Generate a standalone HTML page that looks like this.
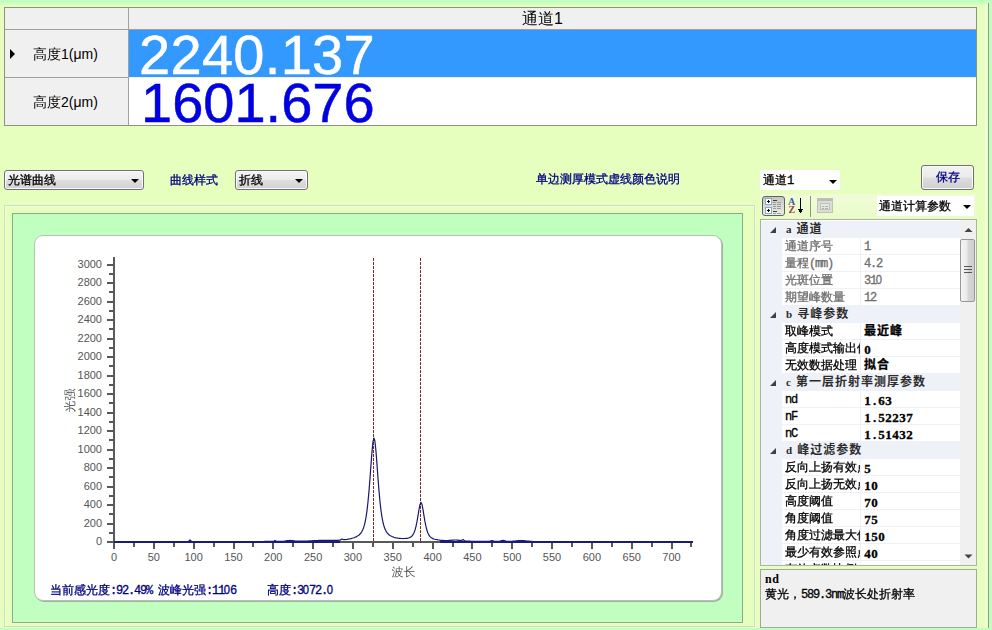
<!DOCTYPE html>
<html lang="zh-CN">
<head>
<meta charset="utf-8">
<title>光谱曲线</title>
<style>
html,body{margin:0;padding:0;}
body{width:992px;height:630px;position:relative;overflow:hidden;background:#E6FFBF;
  font-family:"Liberation Sans","Noto Sans CJK SC",sans-serif;font-size:12px;color:#000;}
.abs{position:absolute;}
.t{position:absolute;white-space:nowrap;line-height:1;}
#gtop{left:0;top:0;width:992px;height:6px;background:linear-gradient(#C0FFC0 0,#C0FFC0 35%,#E6FFBF 100%);}
#gbot{left:0;top:628px;width:992px;height:2px;background:#C0FFC0;}
#gright{left:989px;top:0;width:3px;height:630px;background:#C0FFC0;}
#rl1{left:985px;top:4px;width:2px;height:623px;background:#F4FDE0;}
#rl2{left:988px;top:3px;width:1px;height:625px;background:#8E9E7E;}
#tbl{left:4px;top:7px;width:971px;height:117px;border:1px solid #8E937F;background:#F0F0F0;}
#tbl .hsep{left:0;width:971px;height:1px;background:#A0A0A0;}
#tbl .vsep{left:123px;top:0;width:1px;height:117px;background:#A0A0A0;}
#r1{left:124px;top:22px;width:847px;height:47px;background:#3399FF;}
#r2{left:124px;top:70px;width:847px;height:47px;background:#FFFFFF;}
.big{font-size:56px;letter-spacing:0.3px;-webkit-text-stroke:0.5px currentColor;}
.rowlbl{font-size:14px;font-family:"Liberation Sans","WenQuanYi Zen Hei",sans-serif;}
.combo{height:18px;border:1px solid #707070;border-radius:3px;background:linear-gradient(#F4F4F4 0,#ECECEC 48%,#DEDEDE 52%,#D0D0D0 100%);box-shadow:inset 0 0 0 1px #FAFAFA;}
.arr{position:absolute;width:0;height:0;border-left:4px solid transparent;border-right:4px solid transparent;border-top:4px solid #000;}
.s12{font-family:"WenQuanYi Zen Hei","Noto Sans CJK SC",sans-serif;font-size:12px;-webkit-text-stroke:0.3px currentColor;}
.s12 i,.m{font-style:normal;font-family:"Liberation Mono",monospace;letter-spacing:-1.2px;}
.s12 u{text-decoration:none;font-family:"Liberation Sans",sans-serif;display:inline-block;width:6px;letter-spacing:0;text-indent:-0.6px;font-size:12.5px;transform:scaleX(0.9);}
.navy{color:#000080;}
#bev{left:4px;top:205px;width:751px;height:422px;border:1px solid #CFE0B4;box-shadow:inset 1px 1px 0 #F6FDE6, 1px 1px 0 #F6FDE6;box-sizing:border-box;}
#gp{left:12px;top:213px;width:731px;height:410px;background:#C0FFC0;border:1px solid #8CAA8C;box-sizing:border-box;}
#wb{left:34px;top:235px;width:688px;height:366px;background:#fff;border-radius:9px;border:1px solid #B4C4B4;box-shadow:1px 1px 0 #A4B0A4;box-sizing:border-box;}
svg text{font-family:"Liberation Sans","Noto Sans CJK SC",sans-serif;}
/* property grid */
#pg{left:760px;top:219px;width:215px;height:345px;border:1px solid #A9B4A4;background:#fff;overflow:hidden;}
.row{position:absolute;left:0;width:199px;height:17px;}
.cat{background:#EEF1F7;}
.cat .ct{position:absolute;left:26px;top:2px;letter-spacing:1px;font-weight:bold;color:#2C2C2C;white-space:nowrap;line-height:13px;font-family:"Liberation Serif","Noto Sans CJK SC",sans-serif;font-size:12px;}
.cat .ct b{font-family:"Liberation Serif",serif;font-size:11px;margin-right:5px;letter-spacing:0;margin-left:-1px;}
.tri{position:absolute;left:9px;top:6px;width:0;height:0;border-left:6px solid transparent;border-bottom:6px solid #404040;}
.ind{position:absolute;left:0;top:0;width:21px;height:17px;background:#EEF1F7;}
.lab{position:absolute;left:21px;top:0;width:78px;height:16px;background:#fff;border-bottom:1px solid #EEF1F7;border-right:1px solid #EEF1F7;overflow:hidden;white-space:nowrap;}
.lab span{position:absolute;left:3px;top:2px;line-height:13px;}
.val{position:absolute;left:100px;top:0;width:99px;height:16px;background:#fff;border-bottom:1px solid #EEF1F7;overflow:hidden;white-space:nowrap;}
.val span{position:absolute;left:3px;top:2px;line-height:13px;}
.val.bd span{top:3px;}
.ro{color:#6D6D6D;}
.bd{font-weight:bold;letter-spacing:1px;font-family:"Liberation Mono","Noto Sans CJK SC",sans-serif;}
.bd i{font-style:normal;letter-spacing:0;font-family:"Liberation Serif",serif;font-weight:bold;font-size:13px;display:inline-block;width:7px;text-align:center;}
#sb{left:199px;top:0;width:16px;height:345px;background:#F0F0F0;}
#thumb{left:0px;top:19px;width:13px;height:61px;border:1px solid #979797;border-radius:2px;background:linear-gradient(90deg,#F4F4F4 0,#EAEAEA 45%,#D6D6D6 55%,#CFCFCF 100%);}
#desc{left:760px;top:569px;width:215px;height:57px;border:1px solid #A0A8A0;background:#F0F0F0;}
</style>
</head>
<body>
<div id="gtop" class="abs"></div><div id="gbot" class="abs"></div><div id="gright" class="abs"></div><div id="rl1" class="abs"></div><div id="rl2" class="abs"></div>
<div id="tbl" class="abs">
  <div class="abs hsep" style="top:21px"></div>
  <div class="abs hsep" style="top:69px;width:124px"></div>
  <div class="abs vsep"></div>
  <div id="r1" class="abs"></div>
  <div id="r2" class="abs"></div>
  <div class="t" style="left:517px;top:3px;font-size:16px;font-family:'Liberation Sans','WenQuanYi Zen Hei',sans-serif;">通道1</div>
  <div class="abs" style="left:5px;top:41px;width:0;height:0;border-top:5px solid transparent;border-bottom:5px solid transparent;border-left:5px solid #000;"></div>
  <div class="t rowlbl" style="left:28px;top:39px;">高度1(μm)</div>
  <div class="t rowlbl" style="left:28px;top:87px;">高度2(μm)</div>
  <div class="t big" style="left:134px;top:18.5px;color:#fff;">2240.137</div>
  <div class="t big" style="left:136px;top:66.5px;color:#0000E0;letter-spacing:0">1601.676</div>
</div>
<div class="abs combo" style="left:4px;top:170px;width:138px;"><span class="t s12" style="left:3px;top:3px;">光谱曲线</span><span class="arr" style="right:4px;top:8px"></span></div>
<div class="t s12 navy" style="left:170px;top:174px;">曲线样式</div>
<div class="abs combo" style="left:235px;top:170px;width:71px;"><span class="t s12" style="left:3px;top:3px;">折线</span><span class="arr" style="right:4px;top:8px"></span></div>
<div class="t s12 navy" style="left:536px;top:173px;">单边测厚模式虚线颜色说明</div>
<div class="abs" style="left:760px;top:170px;width:80px;height:20px;background:#fff;"><span class="t s12" style="left:3px;top:4px;">通道<i>1</i></span><span class="arr" style="left:69px;top:10px"></span></div>
<div class="abs" style="left:921px;top:165px;width:51px;height:23px;border:1px solid #707070;border-radius:3px;background:linear-gradient(#F2F2F2 0,#EBEBEB 48%,#DDDDDD 52%,#CFCFCF 100%);box-shadow:inset 0 0 0 1px #FAFAFA;"><span class="t s12 navy" style="left:14px;top:5px;">保存</span></div>
<div id="bev" class="abs"></div><div id="gp" class="abs"></div><div id="wb" class="abs"></div>
<svg class="abs" style="left:0;top:0" width="992" height="630" viewBox="0 0 992 630">
<g fill="#595959" shape-rendering="crispEdges">
<rect x="113" y="257" width="2" height="292"/>
<rect x="113" y="541" width="580" height="2"/>
<rect x="107" y="541" width="6" height="2"/>
<rect x="109" y="532" width="4" height="2"/>
<rect x="107" y="523" width="6" height="2"/>
<rect x="109" y="513" width="4" height="2"/>
<rect x="107" y="504" width="6" height="2"/>
<rect x="109" y="495" width="4" height="2"/>
<rect x="107" y="486" width="6" height="2"/>
<rect x="109" y="476" width="4" height="2"/>
<rect x="107" y="467" width="6" height="2"/>
<rect x="109" y="458" width="4" height="2"/>
<rect x="107" y="449" width="6" height="2"/>
<rect x="109" y="439" width="4" height="2"/>
<rect x="107" y="430" width="6" height="2"/>
<rect x="109" y="421" width="4" height="2"/>
<rect x="107" y="412" width="6" height="2"/>
<rect x="109" y="402" width="4" height="2"/>
<rect x="107" y="393" width="6" height="2"/>
<rect x="109" y="384" width="4" height="2"/>
<rect x="107" y="375" width="6" height="2"/>
<rect x="109" y="365" width="4" height="2"/>
<rect x="107" y="356" width="6" height="2"/>
<rect x="109" y="347" width="4" height="2"/>
<rect x="107" y="338" width="6" height="2"/>
<rect x="109" y="328" width="4" height="2"/>
<rect x="107" y="319" width="6" height="2"/>
<rect x="109" y="310" width="4" height="2"/>
<rect x="107" y="301" width="6" height="2"/>
<rect x="109" y="291" width="4" height="2"/>
<rect x="107" y="282" width="6" height="2"/>
<rect x="109" y="273" width="4" height="2"/>
<rect x="107" y="264" width="6" height="2"/>
<rect x="113.0" y="543" width="2" height="6"/>
<rect x="132.9" y="543" width="2" height="4"/>
<rect x="152.8" y="543" width="2" height="6"/>
<rect x="172.7" y="543" width="2" height="4"/>
<rect x="192.6" y="543" width="2" height="6"/>
<rect x="212.6" y="543" width="2" height="4"/>
<rect x="232.5" y="543" width="2" height="6"/>
<rect x="252.4" y="543" width="2" height="4"/>
<rect x="272.3" y="543" width="2" height="6"/>
<rect x="292.2" y="543" width="2" height="4"/>
<rect x="312.1" y="543" width="2" height="6"/>
<rect x="332.0" y="543" width="2" height="4"/>
<rect x="351.9" y="543" width="2" height="6"/>
<rect x="371.8" y="543" width="2" height="4"/>
<rect x="391.8" y="543" width="2" height="6"/>
<rect x="411.7" y="543" width="2" height="4"/>
<rect x="431.6" y="543" width="2" height="6"/>
<rect x="451.5" y="543" width="2" height="4"/>
<rect x="471.4" y="543" width="2" height="6"/>
<rect x="491.3" y="543" width="2" height="4"/>
<rect x="511.2" y="543" width="2" height="6"/>
<rect x="531.1" y="543" width="2" height="4"/>
<rect x="551.0" y="543" width="2" height="6"/>
<rect x="570.9" y="543" width="2" height="4"/>
<rect x="590.9" y="543" width="2" height="6"/>
<rect x="610.8" y="543" width="2" height="4"/>
<rect x="630.7" y="543" width="2" height="6"/>
<rect x="650.6" y="543" width="2" height="4"/>
<rect x="670.5" y="543" width="2" height="6"/>
<rect x="690.4" y="543" width="2" height="4"/>
</g>
<g fill="#555" font-size="11">
<text x="102" y="545.2" text-anchor="end">0</text>
<text x="102" y="526.7" text-anchor="end">200</text>
<text x="102" y="508.2" text-anchor="end">400</text>
<text x="102" y="489.7" text-anchor="end">600</text>
<text x="102" y="471.2" text-anchor="end">800</text>
<text x="102" y="452.7" text-anchor="end">1000</text>
<text x="102" y="434.2" text-anchor="end">1200</text>
<text x="102" y="415.7" text-anchor="end">1400</text>
<text x="102" y="397.2" text-anchor="end">1600</text>
<text x="102" y="378.7" text-anchor="end">1800</text>
<text x="102" y="360.2" text-anchor="end">2000</text>
<text x="102" y="341.7" text-anchor="end">2200</text>
<text x="102" y="323.2" text-anchor="end">2400</text>
<text x="102" y="304.7" text-anchor="end">2600</text>
<text x="102" y="286.2" text-anchor="end">2800</text>
<text x="102" y="267.7" text-anchor="end">3000</text>
<text x="114.0" y="561" text-anchor="middle">0</text>
<text x="153.8" y="561" text-anchor="middle">50</text>
<text x="193.6" y="561" text-anchor="middle">100</text>
<text x="233.5" y="561" text-anchor="middle">150</text>
<text x="273.3" y="561" text-anchor="middle">200</text>
<text x="313.1" y="561" text-anchor="middle">250</text>
<text x="352.9" y="561" text-anchor="middle">300</text>
<text x="392.8" y="561" text-anchor="middle">350</text>
<text x="432.6" y="561" text-anchor="middle">400</text>
<text x="472.4" y="561" text-anchor="middle">450</text>
<text x="512.2" y="561" text-anchor="middle">500</text>
<text x="552.0" y="561" text-anchor="middle">550</text>
<text x="591.9" y="561" text-anchor="middle">600</text>
<text x="631.7" y="561" text-anchor="middle">650</text>
<text x="671.5" y="561" text-anchor="middle">700</text>
</g>
<text x="403.500" y="576" text-anchor="middle" font-size="12" fill="#555" style="font-family:'WenQuanYi Zen Hei','Noto Sans CJK SC',sans-serif">波长</text>
<text transform="translate(73.5,400.5) rotate(-90)" text-anchor="middle" font-size="12" fill="#555" style="font-family:'WenQuanYi Zen Hei','Noto Sans CJK SC',sans-serif">光强</text>
<line x1="373.5" y1="258" x2="373.5" y2="543" stroke="#6E2A2A" stroke-width="1" stroke-dasharray="3,1" shape-rendering="crispEdges"/>
<line x1="420.5" y1="258" x2="420.5" y2="543" stroke="#6E2A2A" stroke-width="1" stroke-dasharray="3,1" shape-rendering="crispEdges"/>
<polyline fill="none" stroke="#18186E" stroke-width="1.2" stroke-linejoin="round" points="114.0,541.6 115.0,541.6 116.0,541.6 117.0,541.6 118.0,541.6 119.0,541.6 120.0,541.6 121.0,541.6 122.0,541.6 123.0,541.6 124.0,541.6 125.0,541.6 126.0,541.6 127.0,541.6 128.0,541.6 129.0,541.6 130.0,541.6 131.0,541.6 132.0,541.6 133.0,541.6 134.0,541.6 135.0,541.6 136.0,541.6 137.0,541.6 138.0,541.6 139.0,541.6 140.0,541.6 141.0,541.6 142.0,541.6 143.0,541.6 144.0,541.6 145.0,541.6 146.0,541.6 147.0,541.6 148.0,541.6 149.0,541.6 150.0,541.6 151.0,541.6 152.0,541.6 153.0,541.6 154.0,541.6 155.0,541.6 156.0,541.6 157.0,541.6 158.0,541.6 159.0,541.6 160.0,541.6 161.0,541.6 162.0,541.6 163.0,541.6 164.0,541.6 165.0,541.6 166.0,541.6 167.0,541.6 168.0,541.6 169.0,541.6 170.0,541.6 171.0,541.6 172.0,541.6 173.0,541.6 174.0,541.6 175.0,541.6 176.0,541.6 177.0,541.6 178.0,541.6 179.0,541.6 180.0,541.6 181.0,541.5 182.0,541.5 183.0,541.5 184.0,541.5 185.0,541.5 186.0,541.5 187.0,541.5 188.0,541.5 189.0,541.0 190.0,539.9 191.0,541.0 192.0,541.5 193.0,541.5 194.0,541.5 195.0,541.5 196.0,541.5 197.0,541.5 198.0,541.5 199.0,541.5 200.0,541.5 201.0,541.5 202.0,541.5 203.0,541.5 204.0,541.5 205.0,541.5 206.0,541.5 207.0,541.5 208.0,541.5 209.0,541.5 210.0,541.5 211.0,541.5 212.0,541.5 213.0,541.5 214.0,541.5 215.0,541.5 216.0,541.5 217.0,541.5 218.0,541.5 219.0,541.5 220.0,541.5 221.0,541.5 222.0,541.5 223.0,541.5 224.0,541.5 225.0,541.5 226.0,541.5 227.0,541.5 228.0,541.5 229.0,541.5 230.0,541.5 231.0,541.5 232.0,541.5 233.0,541.5 234.0,541.5 235.0,541.5 236.0,541.5 237.0,541.5 238.0,541.5 239.0,541.5 240.0,541.5 241.0,541.5 242.0,541.5 243.0,541.5 244.0,541.5 245.0,541.5 246.0,541.5 247.0,541.5 248.0,541.5 249.0,541.5 250.0,541.5 251.0,541.5 252.0,541.5 253.0,541.5 254.0,541.5 255.0,541.5 256.0,541.5 257.0,541.5 258.0,541.5 259.0,541.5 260.0,541.5 261.0,541.5 262.0,541.5 263.0,541.5 264.0,541.5 265.0,541.4 266.0,541.4 267.0,541.4 268.0,541.4 269.0,541.4 270.0,541.4 271.0,541.4 272.0,541.4 273.0,541.4 274.0,541.1 275.0,540.4 276.0,541.0 277.0,541.4 278.0,541.4 279.0,541.4 280.0,541.4 281.0,541.4 282.0,541.3 283.0,541.3 284.0,541.2 285.0,541.0 286.0,540.9 287.0,540.7 288.0,540.6 289.0,540.5 290.0,540.4 291.0,540.5 292.0,540.6 293.0,540.7 294.0,540.8 295.0,541.0 296.0,541.1 297.0,541.2 298.0,541.2 299.0,541.2 300.0,541.2 301.0,541.2 302.0,541.2 303.0,541.2 304.0,541.1 305.0,541.1 306.0,541.1 307.0,541.0 308.0,541.0 309.0,540.9 310.0,540.9 311.0,540.8 312.0,540.8 313.0,540.7 314.0,540.7 315.0,540.6 316.0,540.6 317.0,540.5 318.0,540.5 319.0,540.4 320.0,540.4 321.0,540.4 322.0,540.4 323.0,540.4 324.0,540.4 325.0,540.4 326.0,540.4 327.0,540.4 328.0,540.4 329.0,540.4 330.0,540.4 331.0,540.4 332.0,540.4 333.0,540.4 334.0,540.4 335.0,540.4 336.0,540.3 337.0,540.3 338.0,540.3 339.0,540.2 340.0,540.1 341.0,539.6 342.0,539.0 343.0,539.4 344.0,539.7 345.0,539.7 346.0,539.5 347.0,539.4 348.0,539.2 349.0,539.0 350.0,538.8 351.0,538.6 352.0,538.3 353.0,538.0 354.0,537.7 355.0,537.3 356.0,536.9 357.0,536.3 358.0,535.7 359.0,535.0 360.0,534.0 361.0,532.9 362.0,531.3 363.0,529.3 364.0,526.4 365.0,522.6 366.0,517.4 367.0,510.6 368.0,501.8 369.0,490.9 370.0,478.3 371.0,464.6 372.0,451.6 373.0,441.7 374.0,438.0 375.0,441.7 376.0,451.5 377.0,464.6 378.0,478.2 379.0,490.9 380.0,501.7 381.0,510.5 382.0,517.3 383.0,522.5 384.0,526.3 385.0,529.1 386.0,531.1 387.0,532.6 388.0,533.8 389.0,534.7 390.0,535.4 391.0,536.0 392.0,536.5 393.0,536.9 394.0,537.3 395.0,537.6 396.0,537.8 397.0,538.0 398.0,538.2 399.0,538.3 400.0,538.4 401.0,538.5 402.0,538.5 403.0,538.6 404.0,538.5 405.0,538.5 406.0,538.4 407.0,538.3 408.0,538.1 409.0,537.8 410.0,537.4 411.0,536.8 412.0,536.0 413.0,534.7 414.0,532.8 415.0,530.1 416.0,526.4 417.0,521.5 418.0,515.6 419.0,509.5 420.0,504.4 421.0,502.4 422.0,504.5 423.0,509.6 424.0,515.8 425.0,521.7 426.0,526.7 427.0,530.5 428.0,533.3 429.0,535.2 430.0,536.6 431.0,537.5 432.0,538.1 433.0,538.6 434.0,539.0 435.0,539.3 436.0,539.5 437.0,539.7 438.0,539.9 439.0,540.0 440.0,540.2 441.0,540.3 442.0,540.4 443.0,540.4 444.0,540.5 445.0,540.5 446.0,540.5 447.0,540.5 448.0,540.5 449.0,540.4 450.0,540.4 451.0,540.3 452.0,540.2 453.0,540.1 454.0,540.1 455.0,540.0 456.0,540.0 457.0,540.1 458.0,540.2 459.0,540.3 460.0,540.4 461.0,540.5 462.0,540.1 463.0,539.6 464.0,540.3 465.0,540.9 466.0,541.1 467.0,541.1 468.0,541.2 469.0,541.2 470.0,541.2 471.0,541.3 472.0,541.3 473.0,541.3 474.0,541.3 475.0,541.3 476.0,541.3 477.0,541.3 478.0,541.3 479.0,541.3 480.0,541.3 481.0,541.3 482.0,541.4 483.0,541.4 484.0,541.4 485.0,541.4 486.0,541.4 487.0,541.4 488.0,541.4 489.0,541.4 490.0,541.2 491.0,540.8 492.0,540.5 493.0,540.8 494.0,541.3 495.0,541.4 496.0,541.4 497.0,541.4 498.0,541.4 499.0,541.3 500.0,541.1 501.0,540.8 502.0,540.5 503.0,540.4 504.0,540.5 505.0,540.8 506.0,541.1 507.0,541.3 508.0,541.4 509.0,541.4 510.0,541.4 511.0,541.3 512.0,541.3 513.0,541.2 514.0,541.1 515.0,541.0 516.0,540.9 517.0,540.8 518.0,540.6 519.0,540.6 520.0,540.5 521.0,540.5 522.0,540.5 523.0,540.6 524.0,540.7 525.0,540.8 526.0,540.9 527.0,541.0 528.0,541.1 529.0,541.2 530.0,541.3 531.0,541.4 532.0,541.4 533.0,541.5 534.0,541.5 535.0,541.5 536.0,541.5 537.0,541.5 538.0,541.5 539.0,541.5 540.0,541.5 541.0,541.5 542.0,541.5 543.0,541.5 544.0,541.5 545.0,541.5 546.0,541.5 547.0,541.5 548.0,541.5 549.0,541.5 550.0,541.5 551.0,541.5 552.0,541.5 553.0,541.5 554.0,541.5 555.0,541.5 556.0,541.5 557.0,541.5 558.0,541.5 559.0,541.5 560.0,541.5 561.0,541.5 562.0,541.5 563.0,541.5 564.0,541.5 565.0,541.5 566.0,541.5 567.0,541.5 568.0,541.5 569.0,541.5 570.0,541.5 571.0,541.5 572.0,541.5 573.0,541.5 574.0,541.5 575.0,541.5 576.0,541.5 577.0,541.5 578.0,541.5 579.0,541.5 580.0,541.5 581.0,541.5 582.0,541.5 583.0,541.5 584.0,541.5 585.0,541.5 586.0,541.5 587.0,541.5 588.0,541.6 589.0,541.6 590.0,541.6 591.0,541.6 592.0,541.6 593.0,541.6 594.0,541.6 595.0,541.6 596.0,541.6 597.0,541.6 598.0,541.6 599.0,541.6 600.0,541.6 601.0,541.6 602.0,541.6 603.0,541.6 604.0,541.6 605.0,541.6 606.0,541.6 607.0,541.6 608.0,541.6 609.0,541.6 610.0,541.6 611.0,541.6 612.0,541.6 613.0,541.6 614.0,541.6 615.0,541.6 616.0,541.6 617.0,541.6 618.0,541.6 619.0,541.6 620.0,541.6 621.0,541.6 622.0,541.6 623.0,541.6 624.0,541.6 625.0,541.6 626.0,541.6 627.0,541.6 628.0,541.6 629.0,541.6 630.0,541.6 631.0,541.6 632.0,541.6 633.0,541.6 634.0,541.6 635.0,541.6 636.0,541.6 637.0,541.6 638.0,541.6 639.0,541.6 640.0,541.6 641.0,541.6 642.0,541.6 643.0,541.6 644.0,541.6 645.0,541.6 646.0,541.6 647.0,541.6 648.0,541.6 649.0,541.6 650.0,541.6 651.0,541.6 652.0,541.6 653.0,541.6 654.0,541.6 655.0,541.6 656.0,541.6 657.0,541.6 658.0,541.6 659.0,541.6 660.0,541.6 661.0,541.6 662.0,541.6 663.0,541.6 664.0,541.6 665.0,541.6 666.0,541.6 667.0,541.6 668.0,541.6 669.0,541.6 670.0,541.6 671.0,541.6 672.0,541.6 673.0,541.6 674.0,541.6 675.0,541.6 676.0,541.6 677.0,541.6 678.0,541.6 679.0,541.6 680.0,541.6 681.0,541.6 682.0,541.6 683.0,541.6 684.0,541.6 685.0,541.6 686.0,541.6 687.0,541.6 688.0,541.6 689.0,541.6 690.0,541.6 691.0,541.6 692.0,541.6 693.0,541.6"/>
<rect x="114" y="541" width="226" height="2" fill="#1B1B78"/><rect x="440" y="541" width="253" height="2" fill="#1B1B78"/>
</svg>
<div class="t s12 navy" style="left:50px;top:584px;">当前感光度<i>:92.49% </i>波峰光强<i>:11<u>0</u>6</i></div>
<div class="t s12 navy" style="left:267px;top:584px;">高度<i>:3<u>0</u>72.<u>0</u></i></div>
<div class="abs" style="left:760px;top:194px;width:216px;height:25px;background:linear-gradient(#F0FCD8,#E9FBC6);"></div>
<div class="abs" style="left:762px;top:196px;width:21px;height:18px;border:1px solid #5E625A;border-radius:3px;background:linear-gradient(#C4C6C0,#ECEEE6);"></div>
<svg class="abs" style="left:760px;top:194px" width="80" height="25" viewBox="0 0 80 25">
 <g shape-rendering="crispEdges">
  <rect x="5.500" y="4.500" width="6" height="6" fill="#fff" stroke="#8FAACB"/><rect x="7" y="7" width="3" height="1" fill="#000"/><rect x="8" y="6" width="1" height="3" fill="#000"/>
  <rect x="5.500" y="13.500" width="6" height="6" fill="#fff" stroke="#8FAACB"/><rect x="7" y="16" width="3" height="1" fill="#000"/><rect x="8" y="15" width="1" height="3" fill="#000"/>
  <g fill="#3C3C3C"><rect x="13" y="6" width="4" height="1"/><rect x="13" y="17" width="4" height="1"/></g>
  <g fill="#9C9C9C"><rect x="13" y="8" width="3" height="1"/><rect x="17" y="8" width="4" height="1"/><rect x="13" y="10" width="3" height="1"/><rect x="17" y="10" width="4" height="1"/><rect x="13" y="12" width="3" height="1"/><rect x="17" y="12" width="4" height="1"/><rect x="13" y="14" width="3" height="1"/><rect x="17" y="14" width="4" height="1"/>
  <rect x="13" y="19" width="3" height="1"/><rect x="17" y="19" width="4" height="1"/></g>
  <rect x="40" y="4" width="1" height="15" fill="#000"/><rect x="38" y="15" width="5" height="1" fill="#000"/><rect x="39" y="16" width="3" height="2" fill="#000"/>
  <rect x="50" y="2" width="1" height="21" fill="#8C9486"/>
  <rect x="57.500" y="4.500" width="15" height="14" fill="#DADCD6" stroke="#BEC2B8"/><rect x="58" y="5" width="14" height="2" fill="#B8BCB2"/><rect x="60.500" y="9.500" width="9" height="6" fill="#E6E8E2" stroke="#BEC2B8"/><rect x="62" y="12" width="2" height="1" fill="#AEB2A8"/><rect x="65" y="12" width="3" height="1" fill="#AEB2A8"/><rect x="62" y="14" width="2" height="1" fill="#AEB2A8"/><rect x="65" y="14" width="3" height="1" fill="#AEB2A8"/>
 </g>
 <text x="28" y="10.5" font-size="10" font-weight="bold" fill="#3A5CA6" style="font-family:'Liberation Serif',serif">A</text>
 <text x="28.500" y="19" font-size="10" font-weight="bold" fill="#A83A48" style="font-family:'Liberation Serif',serif">Z</text>
</svg>
<div class="abs" style="left:877px;top:196px;width:97px;height:20px;background:#fff;"><span class="t s12" style="left:2px;top:4px;">通道计算参数</span><span class="arr" style="left:86px;top:9px"></span></div>
<div id="pg" class="abs">
<div class="row cat" style="top:1px"><span class="tri"></span><span class="ct"><b>a</b>通道</span></div>
<div class="row" style="top:18px"><span class="ind"></span><span class="lab s12 ro"><span>通道序号</span></span><span class="val s12 ro"><span><i>1</i></span></span></div>
<div class="row" style="top:35px"><span class="ind"></span><span class="lab s12 ro"><span>量程<i>(mm)</i></span></span><span class="val s12 ro"><span><i>4.2</i></span></span></div>
<div class="row" style="top:52px"><span class="ind"></span><span class="lab s12 ro"><span>光斑位置</span></span><span class="val s12 ro"><span><i>31<u>0</u></i></span></span></div>
<div class="row" style="top:69px"><span class="ind"></span><span class="lab s12 ro"><span>期望峰数量</span></span><span class="val s12 ro"><span><i>12</i></span></span></div>
<div class="row cat" style="top:86px"><span class="tri"></span><span class="ct"><b>b</b>寻峰参数</span></div>
<div class="row" style="top:103px"><span class="ind"></span><span class="lab s12 "><span>取峰模式</span></span><span class="val s12 bd"><span>最近峰</span></span></div>
<div class="row" style="top:120px"><span class="ind"></span><span class="lab s12 "><span>高度模式输出值</span></span><span class="val s12 bd"><span><i>0</i></span></span></div>
<div class="row" style="top:137px"><span class="ind"></span><span class="lab s12 "><span>无效数据处理</span></span><span class="val s12 bd"><span>拟合</span></span></div>
<div class="row cat" style="top:154px"><span class="tri"></span><span class="ct"><b>c</b>第一层折射率测厚参数</span></div>
<div class="row" style="top:171px"><span class="ind"></span><span class="lab s12 "><span><i>nd</i></span></span><span class="val s12 bd"><span><i>1</i><i>.</i><i>6</i><i>3</i></span></span></div>
<div class="row" style="top:188px"><span class="ind"></span><span class="lab s12 "><span><i>nF</i></span></span><span class="val s12 bd"><span><i>1</i><i>.</i><i>5</i><i>2</i><i>2</i><i>3</i><i>7</i></span></span></div>
<div class="row" style="top:205px"><span class="ind"></span><span class="lab s12 "><span><i>nC</i></span></span><span class="val s12 bd"><span><i>1</i><i>.</i><i>5</i><i>1</i><i>4</i><i>3</i><i>2</i></span></span></div>
<div class="row cat" style="top:222px"><span class="tri"></span><span class="ct"><b>d</b>峰过滤参数</span></div>
<div class="row" style="top:239px"><span class="ind"></span><span class="lab s12 "><span>反向上扬有效点数</span></span><span class="val s12 bd"><span><i>5</i></span></span></div>
<div class="row" style="top:256px"><span class="ind"></span><span class="lab s12 "><span>反向上扬无效点数</span></span><span class="val s12 bd"><span><i>1</i><i>0</i></span></span></div>
<div class="row" style="top:273px"><span class="ind"></span><span class="lab s12 "><span>高度阈值</span></span><span class="val s12 bd"><span><i>7</i><i>0</i></span></span></div>
<div class="row" style="top:290px"><span class="ind"></span><span class="lab s12 "><span>角度阈值</span></span><span class="val s12 bd"><span><i>7</i><i>5</i></span></span></div>
<div class="row" style="top:307px"><span class="ind"></span><span class="lab s12 "><span>角度过滤最大值</span></span><span class="val s12 bd"><span><i>1</i><i>5</i><i>0</i></span></span></div>
<div class="row" style="top:324px"><span class="ind"></span><span class="lab s12 "><span>最少有效参照点数</span></span><span class="val s12 bd"><span><i>4</i><i>0</i></span></span></div>
<div class="row" style="top:341px"><span class="ind"></span><span class="lab s12 "><span>有效点数比例</span></span><span class="val s12 bd"><span><i>5</i><i>0</i></span></span></div>
<div id="sb" class="abs"><div id="thumb" class="abs"></div>
<svg class="abs" style="left:0;top:0" width="16" height="345" viewBox="0 0 16 345"><path d="M4.500 12 L8.500 8 L12.500 12 Z" fill="#444"/><path d="M4.500 334.5 L12.500 334.5 L8.500 338.5 Z" fill="#444"/><g fill="#555"><rect x="4" y="46" width="8" height="1"/><rect x="4" y="49" width="8" height="1"/><rect x="4" y="52" width="8" height="1"/></g></svg>
</div></div>
<div id="desc" class="abs"><span class="t" style="left:4px;top:3px;font-family:'Liberation Serif',serif;font-weight:bold;font-size:12px;letter-spacing:0.5px;">nd</span><span class="t s12" style="left:4px;top:18px;">黄光，<i>589.3nm</i>波长处折射率</span></div>
</body>
</html>
